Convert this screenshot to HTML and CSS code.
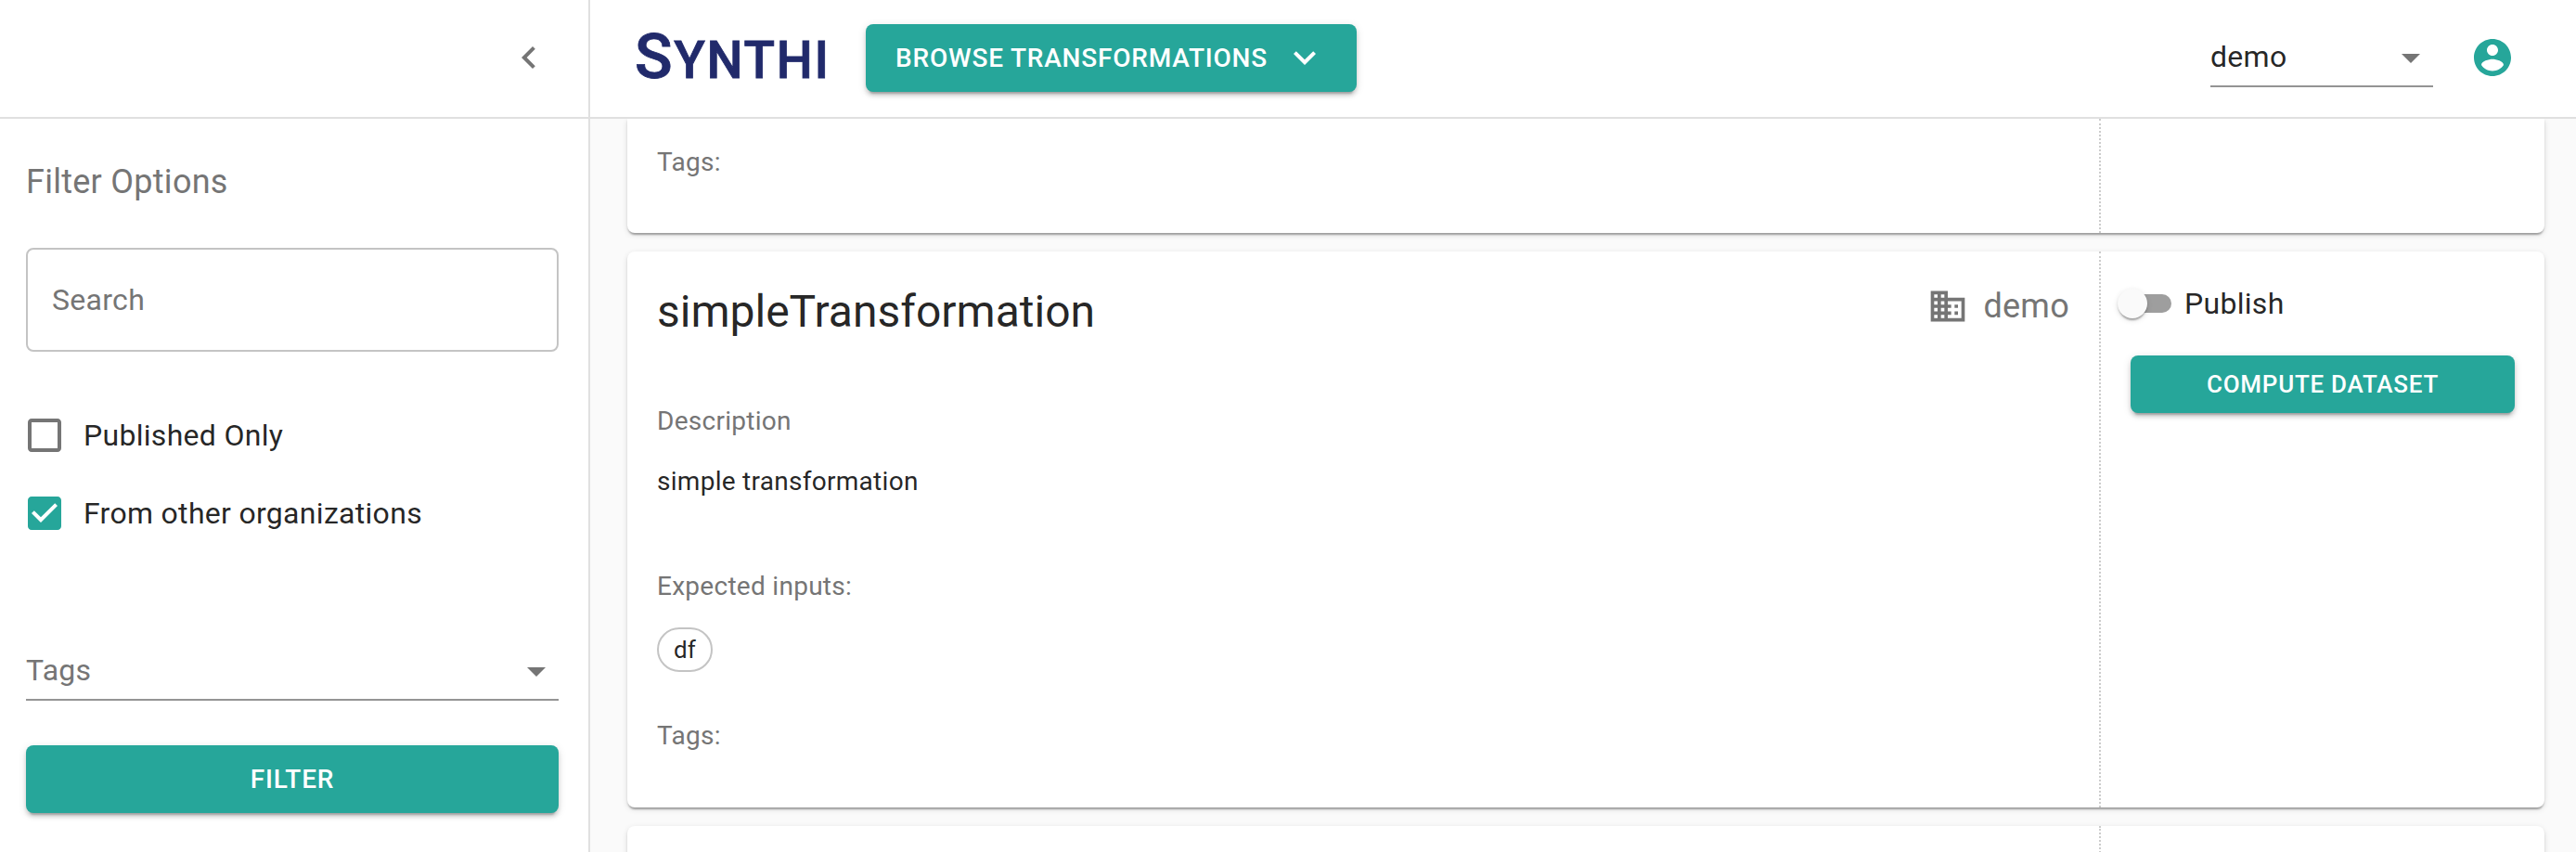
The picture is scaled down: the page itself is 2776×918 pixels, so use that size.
FILE: index.html
```html
<!DOCTYPE html>
<html lang="en">
<head>
<meta charset="utf-8">
<title>Synthi</title>
<link rel="stylesheet" href="styles.css">
</head>
<body>
<div class="app">
  <aside class="sidebar">
    <div class="sidebar-head">
      <svg class="icon" viewBox="0 0 24 24"><path d="M15.41 7.41L14 6l-6 6 6 6 1.41-1.41L10.83 12z"/></svg>
    </div>
    <div class="filters">
      <h2 class="filters-title">Filter Options</h2>
      <div class="search">Search</div>
      <label class="check check-first">
        <svg class="icon" viewBox="0 0 24 24"><path d="M19 5v14H5V5h14m0-2H5c-1.1 0-2 .9-2 2v14c0 1.1.9 2 2 2h14c1.1 0 2-.9 2-2V5c0-1.1-.9-2-2-2z"/></svg>
        <span>Published Only</span>
      </label>
      <label class="check">
        <svg class="icon teal" viewBox="0 0 24 24"><path d="M19 3H5c-1.11 0-2 .9-2 2v14c0 1.1.89 2 2 2h14c1.11 0 2-.9 2-2V5c0-1.1-.89-2-2-2zm-9 14l-5-5 1.41-1.41L10 14.17l7.59-7.59L19 8l-9 9z"/></svg>
        <span>From other organizations</span>
      </label>
      <div class="select select-tags">
        <span>Tags</span>
        <svg class="icon" viewBox="0 0 24 24"><path d="M7 10l5 5 5-5z"/></svg>
      </div>
      <button class="btn">Filter</button>
    </div>
  </aside>
  <div class="main">
    <header class="topbar">
      <div class="logo"><span class="logo-cap">S</span>YNTHI</div>
      <button class="btn btn-browse">Browse Transformations
        <svg class="btn-icon" viewBox="0 0 24 24"><path d="M7.41 8.59L12 13.17l4.59-4.58L18 10l-6 6-6-6 1.41-1.41z"/></svg>
      </button>
      <div class="select select-org">
        <span>demo</span>
        <svg class="icon" viewBox="0 0 24 24"><path d="M7 10l5 5 5-5z"/></svg>
      </div>
      <svg class="icon teal account" viewBox="0 0 24 24"><path d="M12 2C6.48 2 2 6.48 2 12s4.480 10 10 10 10-4.480 10-10S17.520 2 12 2zm0 3c1.660 0 3 1.340 3 3s-1.340 3-3 3-3-1.340-3-3 1.340-3 3-3zm0 14.200c-2.500 0-4.710-1.280-6-3.220.03-1.990 4-3.080 6-3.080 1.990 0 5.970 1.090 6 3.080-1.290 1.940-3.500 3.220-6 3.220z"/></svg>
    </header>
    <main class="list">
      <article class="card card-prev">
        <div class="card-body"><p class="label">Tags:</p></div>
        <div class="card-side"></div>
      </article>
      <article class="card card-full">
        <div class="card-body">
          <div class="card-head">
            <h1 class="card-title">simpleTransformation</h1>
            <div class="org">
              <svg class="icon org-icon" viewBox="0 0 24 24"><path d="M12 7V3H2v18h20V7H12zM6 19H4v-2h2v2zm0-4H4v-2h2v2zm0-4H4V9h2v2zm0-4H4V5h2v2zm4 12H8v-2h2v2zm0-4H8v-2h2v2zm0-4H8V9h2v2zm0-4H8V5h2v2zm10 12h-8v-2h2v-2h-2v-2h2v-2h-2V9h8v10zm-2-8h-2v2h2v-2zm0 4h-2v2h2v-2z"/></svg>
              <span>demo</span>
            </div>
          </div>
          <p class="label label-desc">Description</p>
          <p class="text">simple transformation</p>
          <p class="label label-inputs">Expected inputs:</p>
          <div class="chips"><span class="chip">df</span></div>
          <p class="label">Tags:</p>
        </div>
        <div class="card-side">
          <div class="toggle">
            <span class="switch"><span class="thumb"></span></span>
            <span>Publish</span>
          </div>
          <button class="btn btn-small">Compute Dataset</button>
        </div>
      </article>
      <article class="card card-next">
        <div class="card-body"></div>
        <div class="card-side"></div>
      </article>
    </main>
  </div>
</div>
</body>
</html>
```
FILE: styles.css
```css
* { box-sizing: border-box; }

body {
  margin: 0;
  background: #fafafa;
  color: rgba(0, 0, 0, 0.87);
  font-family: Roboto, "Liberation Sans", sans-serif;
  font-size: 32px;
}

h1, h2, p { margin: 0; font-weight: 400; }

.app { display: flex; width: 2776px; height: 918px; overflow: hidden; }

.icon { display: block; flex: none; width: 48px; height: 48px; fill: #757575; }
.icon.teal { fill: #26a69a; }

.sidebar {
  display: flex;
  flex-direction: column;
  flex: none;
  width: 636px;
  border-right: 2px solid #e0e0e0;
  background: #fff;
}
.sidebar-head {
  display: flex;
  align-items: center;
  justify-content: flex-end;
  height: 128px;
  padding: 0 40px 2px 0;
  border-bottom: 2px solid #e0e0e0;
}
.filters { display: flex; flex-direction: column; padding: 36px 32px 0 28px; }
.filters-title {
  height: 64px;
  color: #757575;
  font-size: 36px;
  line-height: 64px;
  letter-spacing: 0.27px;
}
.search {
  display: flex;
  align-items: center;
  height: 112px;
  margin-top: 39px;
  padding: 0 26px;
  border: 2px solid #c4c4c4;
  border-radius: 8px;
  color: #757575;
  letter-spacing: 0.3px;
}
.check {
  display: flex;
  align-items: center;
  gap: 18px;
  height: 84px;
  margin-left: -4px;
  letter-spacing: 0.3px;
}
.check-first { margin-top: 48px; }

.select {
  display: flex;
  align-items: center;
  justify-content: space-between;
  border-bottom: 2px solid #949494;
  letter-spacing: 0.3px;
}
.select .icon { margin-top: 2px; }
.select-tags { height: 64px; margin: 96px 0 48px; color: #757575; }
.select-org { width: 240px; height: 64px; margin-left: auto; }

.btn {
  display: flex;
  align-items: center;
  justify-content: center;
  height: 73px;
  padding: 0 32px;
  border: 0;
  border-radius: 8px;
  background: #26a69a;
  box-shadow: 0 6px 2px -4px rgba(0, 0, 0, 0.2), 0 4px 4px 0 rgba(0, 0, 0, 0.14), 0 2px 10px 0 rgba(0, 0, 0, 0.12);
  color: #fff;
  font: 500 28px/49px Roboto, "Liberation Sans", sans-serif;
  letter-spacing: 0.8px;
  text-transform: uppercase;
}
.btn-icon { flex: none; width: 48px; height: 48px; margin-left: 16px; fill: #fff; }
.btn-small { width: 100%; height: 62px; font-size: 26px; letter-spacing: 0.74px; }

.main { display: flex; flex-direction: column; flex: 1; }
.topbar {
  display: flex;
  align-items: center;
  flex: none;
  height: 128px;
  padding: 0 66px 2px 48px;
  border-bottom: 2px solid #e0e0e0;
  background: #fff;
}
.logo {
  width: 207px;
  margin-right: 42px;
  padding-top: 2px;
  color: #212a6b;
  font-size: 55px;
  font-weight: 500;
  line-height: 72px;
  letter-spacing: 1.7px;
  white-space: nowrap;
  -webkit-text-stroke: 0.8px #212a6b;
}
.logo-cap { font-size: 67px; }
.btn-browse { width: 529px; white-space: nowrap; }
.account { margin-left: 40px; }

.list { display: flex; flex-direction: column; gap: 20px; flex: 1; padding: 0 34px 0 40px; overflow: hidden; }
.card {
  display: flex;
  flex: none;
  border-radius: 8px;
  background: #fff;
  box-shadow: 0 4px 2px -2px rgba(0, 0, 0, 0.2), 0 2px 2px 0 rgba(0, 0, 0, 0.14), 0 2px 6px 0 rgba(0, 0, 0, 0.12);
}
.card-prev { height: 123px; border-top-left-radius: 0; border-top-right-radius: 0; }
.card-full { height: 599px; }
.card-next { height: 200px; }
.card-body { flex: 1; padding: 23px 32px 0; }
.card-side { flex: none; width: 480px; padding: 24px 32px 0; border-left: 2px dotted #ccc; }

.card-head { display: flex; justify-content: space-between; }
.card-title { padding-top: 10px; font-size: 48px; line-height: 64px; }
.org {
  display: flex;
  align-items: center;
  gap: 16px;
  height: 72px;
  color: #757575;
  font-size: 36px;
  letter-spacing: 0.27px;
}
.org-icon { width: 44px; height: 44px; }
.label { color: #757575; font-size: 28px; line-height: 48px; letter-spacing: 0.28px; }
.label-desc { margin-top: 62px; }
.text { margin-top: 17px; font-size: 28px; line-height: 48px; letter-spacing: 0.28px; }
.label-inputs { margin-top: 65px; }
.chips { display: flex; margin: 20px 0 45px; }
.chip {
  display: flex;
  align-items: center;
  height: 48px;
  padding: 0 16px;
  border: 2px solid #c4c4c4;
  border-radius: 24px;
  font-size: 26px;
}

.toggle { display: flex; align-items: center; gap: 14px; height: 64px; margin-bottom: 24px; letter-spacing: 0.3px; }
.switch {
  display: flex;
  align-items: center;
  width: 52px;
  height: 20px;
  margin-left: -8px;
  border-radius: 10px;
  background: #9e9e9e;
}
.thumb {
  flex: none;
  width: 32px;
  height: 32px;
  margin-left: -6px;
  border-radius: 50%;
  background: #fafafa;
  box-shadow: 0 4px 2px -2px rgba(0, 0, 0, 0.2), 0 2px 2px 0 rgba(0, 0, 0, 0.14), 0 2px 6px 0 rgba(0, 0, 0, 0.12);
}
```
